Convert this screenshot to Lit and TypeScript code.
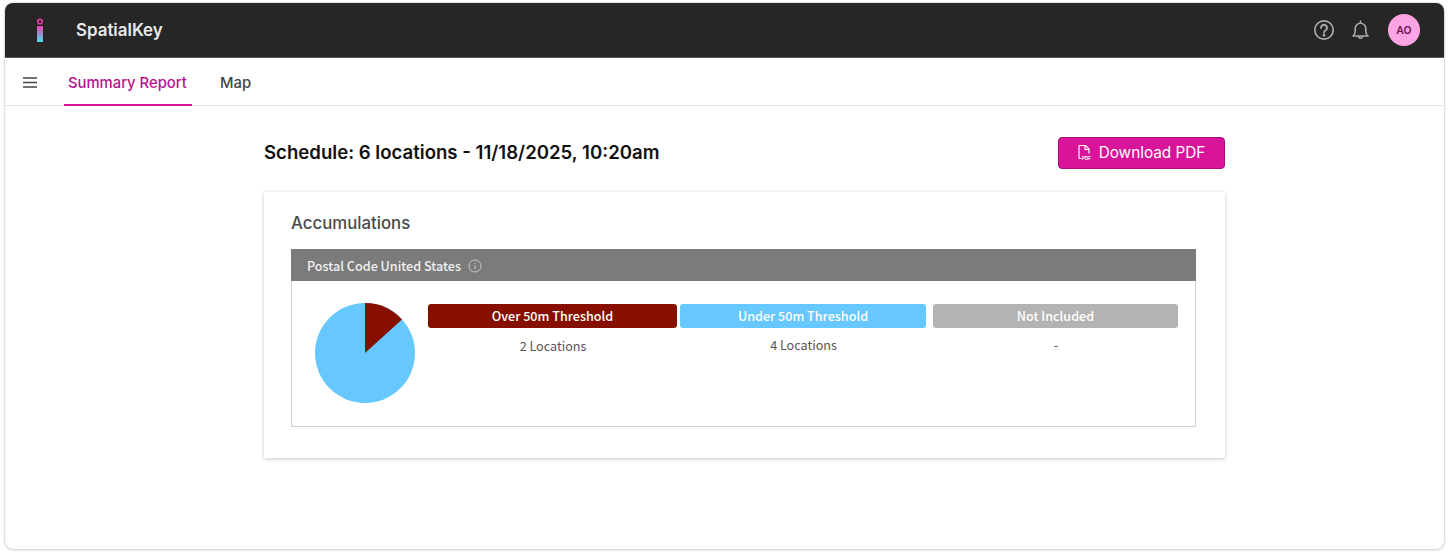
import { LitElement, html, css } from "lit";
import { customElement } from "lit/decorators.js";

@customElement("app-root")
export class AppRoot extends LitElement {
  static styles = css`
    :host { display: block; height: 556px; background: #fff; box-sizing: border-box; padding: 3px 4px 7px 5px; font-family: "Inter", "Liberation Sans", sans-serif; }
    .frame { height: 100%; box-sizing: border-box; border-radius: 8px; overflow: hidden; box-shadow: 0 0 2px rgba(0,0,0,.3), 0 1px 3px rgba(0,0,0,.12); display: flex; flex-direction: column; background: #fff; }
    .top { height: 54px; flex: none; background: #262626; display: flex; align-items: center; border-bottom: 1px solid #555; box-sizing: content-box; }
    .logo { margin-left: 28px; width: 14px; height: 28px; display: block; }
    .brand { margin-left: 29px; color: #e8e8e8; font-size: 16.9px; font-weight: 600; }
    .spacer { flex: 1; }
    .ti { display: block; }
    .help { margin-right: 17px; }
    .bell { margin-right: 19px; }
    .avatar { width: 32px; height: 32px; border-radius: 50%; background: #fda4e4; color: #6b0f55; font-size: 10.5px; font-weight: 600; display: flex; align-items: center; justify-content: center; margin-right: 24px; }
    .tabs { height: 47px; flex: none; display: flex; align-items: stretch; border-bottom: 1px solid #e2e2e2; }
    .menu { margin: 19px 0 0 18px; width: 14px; height: 11px; display: block; }
    .tab { font-size: 14.8px; font-weight: 500; color: #444; display: flex; align-items: center; padding: 4px 4px 0; border-bottom: 2px solid transparent; box-sizing: border-box; height: 48px; }
    .tab.on { color: #b5118f; border-bottom-color: #d9149b; margin-left: 27px; width: 128px; }
    .tab.map { margin-left: 24px; }
    .content { width: 961px; margin: 31px 0 0 259px; }
    .head { display: flex; align-items: center; justify-content: space-between; height: 32px; }
    h1 { margin: 0 0 2px; font-size: 18.6px; font-weight: 600; color: #111; }
    .dl { width: 167px; height: 32px; box-sizing: border-box; background: #d9149b; border: 1px solid #a80f78; border-radius: 4px; color: #fff; font: 400 15.3px "Inter", sans-serif; display: flex; align-items: center; justify-content: center; gap: 7px; padding: 0 0 1px; }
    .card { margin-top: 23px; height: 266px; box-sizing: border-box; padding: 21px 29px 0 27px; background: #fff; box-shadow: 0 1px 4px rgba(0,0,0,.22); }
    h2 { margin: 0; height: 36px; font-size: 16.8px; font-weight: 500; color: #4a4a4a; line-height: 21px; }
    .bar { height: 32px; box-sizing: border-box; padding: 1px 0 0 16px; background: #7b7b7b; color: #f0f0f0; display: flex; align-items: center; gap: 7px; font: 500 12.6px "Noto Sans CJK SC", sans-serif; }
    .body { height: 146px; box-sizing: border-box; border: 1px solid #cfcfcf; border-top: none; display: flex; padding: 22px 17px 0 23px; }
    .pie { width: 100px; height: 100px; display: block; flex: none; }
    .cols { margin-left: 13px; flex: 1; display: flex; align-items: flex-start; padding-top: 1px; }
    .c1 { width: 249px; } .c2 { width: 246px; margin-left: 3px; } .c3 { width: 245px; margin-left: 7px; }
    .label { height: 24px; border-radius: 3px; color: #fff; font: 500 12.6px/24px "Noto Sans CJK SC", sans-serif; text-align: center; }
    .red { background: #870f00; } .blue { background: #66c8ff; } .grey { background: #b3b3b3; }
    .val { margin-top: 9px; padding-left: 1px; font: 400 12.6px/18px "Noto Sans CJK SC", sans-serif; color: #555; text-align: center; }
    .c2 .val, .c3 .val { margin-top: 8px; }
    .pdf { font: 700 4.5px "Liberation Sans", sans-serif; fill: #fff; }
  `;
  render() {
    return html`<div class="frame">
      <div class="top">
        <svg class="logo" viewBox="0 0 14 28"><defs><linearGradient id="g" x1="0" y1="0" x2="0" y2="1"><stop offset="0" stop-color="#ec3fb0"/><stop offset="1" stop-color="#4fdcec"/></linearGradient></defs><circle cx="7" cy="5.5" r="2.3" fill="none" stroke="#e83aa8" stroke-width="1.6"/><rect x="4" y="10" width="6" height="16" fill="url(#g)"/></svg>
        <div class="brand">SpatialKey</div>
        <div class="spacer"></div>
        <svg class="ti help" width="22" height="22" viewBox="0 0 22 22" fill="none" stroke="#aaa" stroke-width="1.7"><circle cx="11" cy="11" r="9.2"/><path d="M8 8.9a3 3 0 1 1 4.7 2.4c-1.1.7-1.7 1.2-1.7 2.3" stroke-linecap="round" stroke-width="1.9"/><circle cx="11" cy="16.2" r=".6" fill="#aaa"/></svg>
        <svg class="ti bell" width="17" height="20" viewBox="0 0 17 20" fill="none" stroke="#aaa" stroke-width="1.6"><path d="M1 16c1.4-1.2 2.2-2.5 2.2-4.8V8.500a5.300 5.300 0 0 1 10.600 0v2.700c0 2.300.8 3.600 2.200 4.800Z" stroke-linejoin="round"/><path d="M8.500 3.200V1M6.800 16.500a1.700 1.700 0 0 0 3.400 0" stroke-linecap="round"/></svg>
        <div class="avatar">AO</div>
      </div>
      <div class="tabs">
        <svg class="menu" viewBox="0 0 14 11" stroke="#444" stroke-width="1.7"><path d="M0 1h14M0 5.500h14M0 10h14"/></svg>
        <div class="tab on">Summary Report</div>
        <div class="tab map">Map</div>
      </div>
      <div class="content">
        <div class="head">
          <h1>Schedule: 6 locations - 11/18/2025, 10:20am</h1>
          <button class="dl"><svg width="14" height="15" viewBox="0 0 14 15" fill="none" stroke="#fff" stroke-width="1.2"><path d="M3.500 13.500H2a1 1 0 0 1-1-1v-11a1 1 0 0 1 1-1h5.500L11 4v4.500"/><path d="M7 .5V4.500H11"/><text class="pdf" x="4" y="14.500" stroke="none">PDF</text></svg>Download PDF</button>
        </div>
        <div class="card">
          <h2>Accumulations</h2>
          <div class="bar">Postal Code United States
            <svg width="14" height="14" viewBox="0 0 14 14" fill="none" stroke="#c8c8c8" stroke-width="1"><circle cx="7" cy="7" r="6"/><path d="M7 6.200v4M7 3.800v1.100"/></svg>
          </div>
          <div class="body">
            <svg class="pie" viewBox="0 0 100 100"><circle cx="50" cy="50" r="50" fill="#66c8ff"/><path d="M50 50V0A50 50 0 0 1 87 16.500Z" fill="#870f00"/></svg>
            <div class="cols">
              <div class="c1"><div class="label red">Over 50m Threshold</div><div class="val">2 Locations</div></div>
              <div class="c2"><div class="label blue">Under 50m Threshold</div><div class="val">4 Locations</div></div>
              <div class="c3"><div class="label grey">Not Included</div><div class="val">-</div></div>
            </div>
          </div>
        </div>
      </div>
    </div>`;
  }
}
